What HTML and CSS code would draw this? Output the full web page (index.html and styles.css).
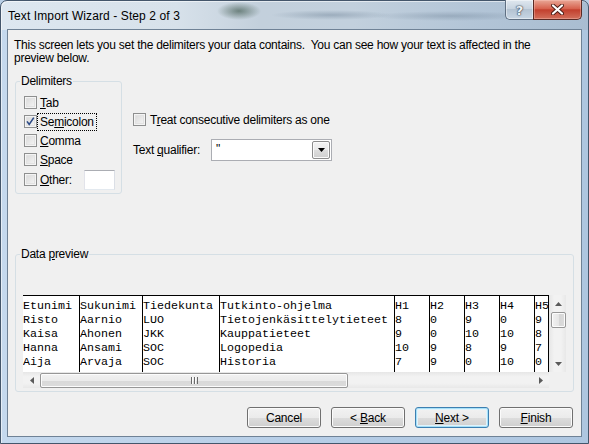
FILE: index.html
```html
<!DOCTYPE html>
<html>
<head>
<meta charset="utf-8">
<title>Text Import Wizard - Step 2 of 3</title>
<link rel="stylesheet" href="styles.css">
</head>
<body>
<div class="window">
  <div class="titlebar">
    <div class="title">Text Import Wizard - Step 2 of 3</div>
    <div class="caption">
      <div class="cap-btn cap-help">?</div>
      <div class="cap-btn cap-close">
        <svg width="13" height="11" viewBox="0 0 13 11">
          <path d="M2 1.5 L11 9.5 M11 1.5 L2 9.5" stroke="#4a1c15" stroke-width="4" stroke-linecap="round" fill="none"/>
          <path d="M2 1.5 L11 9.5 M11 1.5 L2 9.5" stroke="#ffffff" stroke-width="2.2" stroke-linecap="round" fill="none"/>
        </svg>
      </div>
    </div>
  </div>
  <div class="client">
    <p class="intro">This screen lets you set the delimiters your data contains.&nbsp; You can see how your text is affected in the<br>preview below.</p>
    <div class="options">
      <fieldset class="group delims">
        <legend>Delimiters</legend>
        <div class="cb-row"><span class="cb"></span><span class="lbl"><u>T</u>ab</span></div>
        <div class="cb-row"><span class="cb"><svg width="11" height="11" viewBox="0 0 11 11"><path d="M2 5.4 L4.2 8.4 L8.8 1.6" stroke="#2c4a86" stroke-width="1.6" fill="none"/></svg></span><span class="lbl focus">Se<u>m</u>icolon</span></div>
        <div class="cb-row"><span class="cb"></span><span class="lbl"><u>C</u>omma</span></div>
        <div class="cb-row"><span class="cb"></span><span class="lbl"><u>S</u>pace</span></div>
        <div class="cb-row last"><span class="cb"></span><span class="lbl"><u>O</u>ther:</span><span class="textbox"></span></div>
      </fieldset>
      <div class="right-opts">
        <div class="cb-row"><span class="cb"></span><span class="lbl wide">T<u>r</u>eat consecutive delimiters as one</span></div>
        <div class="qual-row">
          <span class="qual-lbl">Text <u>q</u>ualifier:</span>
          <div class="combo">
            <span class="combo-val">"</span>
            <span class="combo-btn"><svg width="7" height="4" viewBox="0 0 7 4"><path d="M0 0 H7 L3.5 4 Z" fill="#000"/></svg></span>
          </div>
        </div>
      </div>
    </div>
    <fieldset class="group preview">
      <legend>Data <u>p</u>review</legend>
      <div class="grid-view">
        <div class="data">
          <div class="col c1"><div>Etunimi</div><div>Risto</div><div>Kaisa</div><div>Hanna</div><div>Aija</div></div>
          <div class="col c2"><div>Sukunimi</div><div>Aarnio</div><div>Ahonen</div><div>Ansami</div><div>Arvaja</div></div>
          <div class="col c3"><div>Tiedekunta</div><div>LUO</div><div>JKK</div><div>SOC</div><div>SOC</div></div>
          <div class="col c4"><div>Tutkinto-ohjelma</div><div>Tietojenkäsittelytieteet</div><div>Kauppatieteet</div><div>Logopedia</div><div>Historia</div></div>
          <div class="col cn"><div>H1</div><div>8</div><div>9</div><div>10</div><div>7</div></div>
          <div class="col cn"><div>H2</div><div>0</div><div>0</div><div>9</div><div>9</div></div>
          <div class="col cn"><div>H3</div><div>9</div><div>10</div><div>8</div><div>0</div></div>
          <div class="col cn"><div>H4</div><div>0</div><div>10</div><div>9</div><div>10</div></div>
          <div class="col cn"><div>H5</div><div>9</div><div>8</div><div>7</div><div>0</div></div>
        </div>
        <div class="vscroll">
          <span class="arr"><svg width="7" height="4" viewBox="0 0 7 4"><path d="M0 4 L3.5 0 L7 4 Z" fill="#5a5a5a"/></svg></span>
          <span class="vthumb"></span>
          <span class="vspace"></span>
          <span class="arr"><svg width="7" height="4" viewBox="0 0 7 4"><path d="M0 0 L3.5 4 L7 0 Z" fill="#5a5a5a"/></svg></span>
        </div>
        <div class="hscroll">
          <span class="arr h"><svg width="4" height="7" viewBox="0 0 4 7"><path d="M4 0 L0 3.5 L4 7 Z" fill="#5a5a5a"/></svg></span>
          <span class="hthumb"><span class="grip"></span></span>
          <span class="hspace"></span>
          <span class="arr h"><svg width="4" height="7" viewBox="0 0 4 7"><path d="M0 0 L4 3.5 L0 7 Z" fill="#5a5a5a"/></svg></span>
        </div>
        <div class="corner"></div>
      </div>
    </fieldset>
    <div class="buttons">
      <button class="btn">Cancel</button>
      <button class="btn">&lt; <u>B</u>ack</button>
      <button class="btn default"><u>N</u>ext &gt;</button>
      <button class="btn"><u>F</u>inish</button>
    </div>
  </div>
</div>
</body>
</html>
```

FILE: styles.css
```css
* { box-sizing: border-box; }
html, body { margin: 0; padding: 0; }
body {
  width: 589px;
  height: 444px;
  overflow: hidden;
  font-family: "Liberation Sans", Arial, sans-serif;
  font-size: 12px;
  letter-spacing: -0.25px;
  color: #000;
  background: #b9cfe6;
}
u { text-decoration: underline; text-underline-offset: 1px; }

.window {
  width: 589px;
  height: 444px;
  border: 1px solid #44566b;
  border-radius: 7px 7px 0 0;
  padding: 0 6px 6px;
  display: flex;
  flex-direction: column;
  background:
    radial-gradient(ellipse 22px 9px at 238px 10px, rgba(70,95,85,.7), rgba(70,95,85,0)),
    radial-gradient(ellipse 60px 5px at 330px 14px, rgba(110,130,150,.45), rgba(110,130,150,0)),
    radial-gradient(ellipse 80px 5px at 450px 15px, rgba(110,130,150,.4), rgba(110,130,150,0)),
    linear-gradient(90deg, #dde7f0 0%, #d7e1ea 30%, #c3d0dc 44%, #c2d0dd 60%, #b3c5d7 80%, #a9bdd1 100%) 0 0 / 100% 29px no-repeat,
    linear-gradient(90deg, #c5d9ee, #b7cee7 50%, #aec6e0);
  box-shadow: inset 1px 1px 0 rgba(255,255,255,.55);
}

.titlebar {
  height: 28px;
  display: flex;
  align-items: flex-start;
  justify-content: space-between;
  flex: none;
}
.title {
  padding: 8px 0 0 1px;
  line-height: 14px;
  font-size: 12px;
  letter-spacing: 0.1px;
}
.caption {
  display: flex;
  margin-top: -1px;
}
.cap-btn {
  height: 20px;
  display: flex;
  align-items: center;
  justify-content: center;
}
.cap-help {
  width: 28px;
  border: 1px solid #5f6f82;
  border-top: none;
  border-right: none;
  border-radius: 0 0 0 5px;
  background: linear-gradient(#dfe7ef, #c8d4e0 45%, #b4c3d2 50%, #c8d6e4);
  box-shadow: inset 0 0 0 1px rgba(255,255,255,.45);
  font: bold 13px "DejaVu Sans", sans-serif;
  letter-spacing: 0;
  color: #eef2f6;
  text-shadow: 0 0 1px #3d4b5c, 0 0 1px #3d4b5c, 0 0 2px #3d4b5c;
  padding-top: 1px;
}
.cap-close {
  width: 49px;
  border: 1px solid #5a2a24;
  border-top: none;
  border-radius: 0 0 5px 0;
  background: linear-gradient(#e9a897, #d7634f 45%, #c2402e 52%, #d2705c);
  box-shadow: inset 0 0 0 1px rgba(255,210,200,.35);
}

.client {
  flex: 1;
  background: #f0f0f0;
  border: 1px solid #6f8296;
  display: flex;
  flex-direction: column;
}

.intro {
  margin: 9px 0 0 6px;
  line-height: 13px;
  white-space: nowrap;
}

.options {
  display: flex;
  margin-top: 9px;
}

.group {
  margin: 0;
  border: 1px solid #d5dfe5;
  border-radius: 3px;
  min-width: 0;
}
.group legend {
  padding: 0 1px;
  line-height: 15px;
}
.delims {
  margin-left: 7px;
  width: 107px;
  padding: 4px 6px 3px 8px;
}
.delims legend { margin-left: -4px; }

.cb-row {
  height: 19px;
  display: flex;
  align-items: center;
}
.cb-row.last { height: 21px; }
.cb {
  width: 13px;
  height: 13px;
  flex: none;
  border: 1px solid #8e8f8f;
  background: linear-gradient(135deg, #d6d6d6, #f8f8f8);
  box-shadow: inset 0 0 0 1px #f4f4f4, inset 0 0 0 2px #e2e2e2;
  display: flex;
  align-items: center;
  justify-content: center;
}
.lbl {
  margin-left: 1px;
  padding: 0 2px;
  line-height: 16px;
  white-space: nowrap;
}
.lbl.wide { margin-left: 2px; }
.lbl.focus { outline: 1px dotted #000; outline-offset: 0; }
.textbox {
  margin-left: auto;
  width: 31px;
  height: 20px;
  background: #fff;
  border: 1px solid #abadb3;
  border-left-color: #e2e3ea;
  border-right-color: #dbdfe6;
  border-bottom-color: #e3e9ef;
}

.right-opts {
  margin-left: 11px;
  padding-top: 36px;
}
.qual-row {
  margin-top: 10px;
  display: flex;
  align-items: center;
  height: 22px;
}
.qual-lbl { width: 78px; white-space: nowrap; }
.combo {
  width: 121px;
  height: 22px;
  background: #fff;
  border: 1px solid #abadb3;
  display: flex;
  align-items: center;
  padding: 1px;
}
.combo-val { flex: 1; padding-left: 3px; line-height: 14px; align-self: flex-start; padding-top: 1px; color: #000; }
.combo-btn {
  width: 18px;
  height: 18px;
  border: 1px solid #8c8c8c;
  border-radius: 2px;
  background: linear-gradient(#f3f3f3, #ebebeb 50%, #dddddd 51%, #cfcfcf);
  box-shadow: inset 0 0 0 1px #fbfbfb;
  display: flex;
  align-items: center;
  justify-content: center;
}

.preview {
  margin: 53px 7px 0 7px;
  padding: 33px 7px 3px 7px;
}
.preview legend { margin-left: -3px; }

.grid-view {
  display: grid;
  grid-template-columns: 526px 17px;
  grid-template-rows: 77px 16px;
  width: 543px;
}
.data {
  background: #fff;
  border-top: 1px solid #000;
  border-right: 1px solid #000;
  display: flex;
  overflow: hidden;
  font-family: "Liberation Mono", "Courier New", monospace;
  font-size: 11.667px;
  letter-spacing: 0;
}
.col {
  flex: none;
  padding-top: 3px;
  white-space: pre;
  overflow: hidden;
}
.col div { line-height: 14px; height: 14px; }
.col + .col { border-left: 1px solid #000; }
.c1 { width: 56px; }
.c2 { width: 63px; }
.c3 { width: 77px; }
.c4 { width: 175px; }
.cn { width: 35px; }

.vscroll {
  display: flex;
  flex-direction: column;
  align-items: center;
  background: linear-gradient(90deg, #e6e6e6, #f2f2f2 30%, #f2f2f2 70%, #e8e8e8);
  padding-left: 1px;
}
.vscroll .arr {
  height: 17px;
  width: 16px;
  flex: none;
  display: flex;
  align-items: center;
  justify-content: center;
}
.vthumb {
  width: 15px;
  height: 16px;
  flex: none;
  border: 1px solid #979797;
  border-radius: 2px;
  background: linear-gradient(90deg, #f2f2f2, #e6e6e6 50%, #d6d6d6 51%, #dcdcdc);
  box-shadow: inset 0 0 0 1px #fcfcfc;
}
.vspace { flex: 1; }

.hscroll {
  display: flex;
  align-items: center;
  background: linear-gradient(#e6e6e6, #f2f2f2 30%, #f2f2f2 70%, #e8e8e8);
}
.hscroll .arr {
  width: 17px;
  height: 16px;
  flex: none;
  display: flex;
  align-items: center;
  justify-content: center;
}
.hthumb {
  width: 308px;
  height: 15px;
  flex: none;
  border: 1px solid #979797;
  border-radius: 2px;
  background: linear-gradient(#f2f2f2, #ebebeb 50%, #d9d9d9 51%, #dcdcdc);
  box-shadow: inset 0 0 0 1px #fcfcfc;
  display: flex;
  align-items: center;
  justify-content: center;
}
.grip {
  width: 7px;
  height: 7px;
  background: repeating-linear-gradient(90deg, #6a6a6a 0 1px, #fdfdfd 1px 2px, transparent 2px 3px);
}
.hspace { flex: 1; }
.corner { background: #f0f0f0; }

.buttons {
  display: flex;
  justify-content: flex-end;
  gap: 10px;
  margin-top: 15px;
  padding-right: 8px;
}
.btn {
  width: 74px;
  height: 21px;
  margin: 0;
  padding: 0;
  font-family: "Liberation Sans", Arial, sans-serif;
  font-size: 12px;
  letter-spacing: -0.2px;
  color: #000;
  border: 1px solid #707070;
  border-radius: 3px;
  background: linear-gradient(#f2f2f2, #ebebeb 50%, #dddddd 51%, #cfcfcf);
  box-shadow: inset 0 0 0 1px #fbfbfb;
}
.btn.default {
  border-color: #3c7fb1;
  box-shadow: inset 0 0 0 1px #a6e0f8, inset 0 0 0 2px #e0f3fc;
}
```
